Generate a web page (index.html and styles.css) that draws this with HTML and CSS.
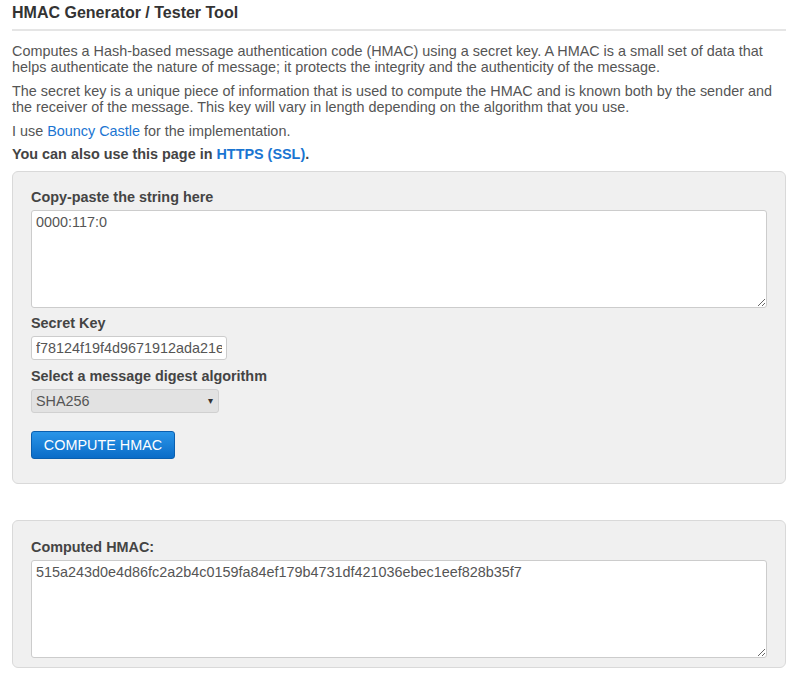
FILE: index.html
```html
<!DOCTYPE html>
<html>
<head>
  <title>HMAC Generator / Tester Tool</title>
  <link rel="stylesheet" href="styles.css">
</head>
<body>
  <h1 class="page-title">HMAC Generator / Tester Tool</h1>

  <p>Computes a Hash-based message authentication code (HMAC) using a secret key. A HMAC is a small set of data that helps authenticate the nature of message; it protects the integrity and the authenticity of the message.</p>
  <p>The secret key is a unique piece of information that is used to compute the HMAC and is known both by the sender and the receiver of the message. This key will vary in length depending on the algorithm that you use.</p>
  <p>I use <a href="#">Bouncy Castle</a> for the implementation.</p>
  <p class="ssl-note">You can also use this page in <a href="#">HTTPS (SSL)</a>.</p>

  <form class="panel tool-form">
    <label class="field-label" for="inputString">Copy-paste the string here</label>
    <textarea id="inputString" class="text-box">0000:117:0</textarea>

    <label class="field-label" for="secretKey">Secret Key</label>
    <input type="text" id="secretKey" class="key-input" value="f78124f19f4d9671912ada21e9b3c4d2">

    <label class="field-label" for="algorithm">Select a message digest algorithm</label>
    <div class="select-wrap">
      <select id="algorithm" class="algo-select">
        <option>SHA256</option>
        <option>SHA1</option>
        <option>SHA384</option>
        <option>SHA512</option>
        <option>MD5</option>
      </select>
      <span class="select-arrow">&#9662;</span>
    </div>

    <button type="button" class="compute-btn">COMPUTE HMAC</button>
  </form>

  <div class="panel result-panel">
    <label class="field-label" for="output">Computed HMAC:</label>
    <textarea id="output" class="text-box">515a243d0e4d86fc2a2b4c0159fa84ef179b4731df421036ebec1eef828b35f7</textarea>
  </div>
</body>
</html>
```

FILE: styles.css
```css
body {
  margin: 0 14px 0 12px;
  font-family: "Liberation Sans", Arial, sans-serif;
  font-size: 14.4px;
  line-height: 16.5px;
  color: #555;
  background-color: #fff;
}
.page-title {
  font-size: 16px;
  line-height: 20px;
  margin: 0;
  padding: 3px 0 6px;
  color: #333;
  border-bottom: 2px solid #e5e5e5;
  margin-bottom: 11.5px;
}
p {
  margin: 0 0 7px;
}
a {
  color: #1a75d2;
  text-decoration: none;
}
.ssl-note {
  font-weight: bold;
  color: #444;
  margin-bottom: 8px;
}
.panel {
  background-color: #f0f0f0;
  border: 1px solid #d9d9d9;
  border-radius: 6px;
  padding: 17px 18px 0;
}
.tool-form {
  padding-bottom: 24px;
  margin-bottom: 36px;
}
.result-panel {
  padding-top: 18px;
  padding-bottom: 9px;
}
.field-label {
  display: block;
  font-weight: bold;
  color: #444;
  margin-bottom: 4.5px;
}
.result-panel .field-label {
  margin-bottom: 5px;
}
.text-box {
  display: block;
  box-sizing: border-box;
  width: 100%;
  height: 98px;
  margin: 0 0 7.5px;
  padding: 3px 4px;
  font-family: "Liberation Sans", Arial, sans-serif;
  font-size: 14.4px;
  line-height: 17px;
  color: #555;
  background: #fff;
  border: 1px solid #ccc;
  border-radius: 3px;
}
.result-panel .text-box {
  margin-bottom: 0;
}
.key-input {
  display: block;
  box-sizing: border-box;
  width: 196px;
  height: 24px;
  margin: 0 0 7.5px;
  padding: 2px 4px;
  font-family: "Liberation Sans", Arial, sans-serif;
  font-size: 14.4px;
  color: #555;
  background: #fff;
  border: 1px solid #ccc;
  border-radius: 3px;
}
.select-wrap {
  position: relative;
  width: 188px;
  margin-bottom: 18px;
}
.algo-select {
  display: block;
  box-sizing: border-box;
  width: 188px;
  height: 24px;
  padding: 0 4px;
  font-family: "Liberation Sans", Arial, sans-serif;
  font-size: 14.4px;
  color: #555;
  background: #e2e2e2;
  border: 1px solid #d0d0d0;
  border-radius: 3px;
  appearance: none;
  -webkit-appearance: none;
}
.select-arrow {
  position: absolute;
  right: 6px;
  top: 4px;
  font-size: 10px;
  color: #333;
  pointer-events: none;
}
.compute-btn {
  display: block;
  box-sizing: border-box;
  width: 144px;
  height: 28px;
  padding: 0;
  font-family: "Liberation Sans", Arial, sans-serif;
  font-size: 14.4px;
  color: #fff;
  background: linear-gradient(#2a95e8, #0a6cc8);
  border: 1px solid #0a5faf;
  border-radius: 3px;
  cursor: pointer;
}
```
